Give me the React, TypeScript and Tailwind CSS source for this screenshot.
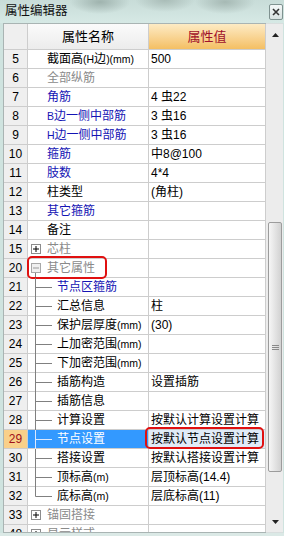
type Kind = "plain" | "plus" | "minus" | "child" | "last";

type RowData = {
  n: string;
  name: string;
  value?: string;
  tone?: "gray" | "blue";
  kind?: Kind;
  selected?: boolean;
  markName?: boolean;
  markValue?: boolean;
};

const rows: RowData[] = [
  { n: "5", name: "截面高(H边)(mm)", value: "500" },
  { n: "6", name: "全部纵筋", tone: "gray" },
  { n: "7", name: "角筋", tone: "blue", value: "4 虫22" },
  { n: "8", name: "B边一侧中部筋", tone: "blue", value: "3 虫16" },
  { n: "9", name: "H边一侧中部筋", tone: "blue", value: "3 虫16" },
  { n: "10", name: "箍筋", tone: "blue", value: "中8@100" },
  { n: "11", name: "肢数", tone: "blue", value: "4*4" },
  { n: "12", name: "柱类型", value: "(角柱)" },
  { n: "13", name: "其它箍筋", tone: "blue" },
  { n: "14", name: "备注" },
  { n: "15", name: "芯柱", tone: "gray", kind: "plus" },
  { n: "20", name: "其它属性", tone: "gray", kind: "minus", markName: true },
  { n: "21", name: "节点区箍筋", tone: "blue", kind: "child" },
  { n: "22", name: "汇总信息", kind: "child", value: "柱" },
  { n: "23", name: "保护层厚度(mm)", kind: "child", value: "(30)" },
  { n: "24", name: "上加密范围(mm)", kind: "child" },
  { n: "25", name: "下加密范围(mm)", kind: "child" },
  { n: "26", name: "插筋构造", kind: "child", value: "设置插筋" },
  { n: "27", name: "插筋信息", kind: "child" },
  { n: "28", name: "计算设置", kind: "child", value: "按默认计算设置计算" },
  { n: "29", name: "节点设置", kind: "child", value: "按默认节点设置计算", selected: true, markValue: true },
  { n: "30", name: "搭接设置", kind: "child", value: "按默认搭接设置计算" },
  { n: "31", name: "顶标高(m)", kind: "child", value: "层顶标高(14.4)" },
  { n: "32", name: "底标高(m)", kind: "last", value: "层底标高(11)" },
  { n: "33", name: "锚固搭接", tone: "gray", kind: "plus" },
  { n: "48", name: "显示样式", tone: "gray", kind: "plus" },
];

// latin runs in the names are drawn a bit smaller, like the reference
function Label({ text }: { text: string }) {
  const parts = text.match(/[\x20-\x7e]+|[^\x20-\x7e]+/g) ?? [];
  return (
    <span>
      {parts.map((p, i) =>
        /^[\x20-\x7e]+$/.test(p) ? (
          <span key={i} className="text-[10.5px]">
            {p}
          </span>
        ) : (
          <span key={i}>{p}</span>
        ),
      )}
    </span>
  );
}

function Toggle({ open, tail }: { open: boolean; tail: boolean }) {
  const stroke = open ? "#a8a8a8" : "#8c8c8c";
  return (
    <svg width="19" height="19" className="shrink-0">
      <rect x="3.5" y="4.5" width="9" height="9" fill={open ? "#f0f0f0" : "#fff"} stroke={stroke} />
      <line x1="5" y1="9" x2="11" y2="9" stroke={open ? "#9a9a9a" : "#000"} />
      {!open && <line x1="8" y1="6" x2="8" y2="12" stroke="#000" />}
      {tail && <line x1="7.5" y1="14" x2="7.5" y2="19" stroke="#808080" />}
    </svg>
  );
}

function Branch({ last, light }: { last: boolean; light: boolean }) {
  const c = light ? "#dbe9ff" : "#808080";
  return (
    <svg width="29" height="19" className="shrink-0">
      <line x1="7.5" y1="0" x2="7.5" y2={last ? 9.5 : 19} stroke={c} />
      <line x1="7.5" y1="9.5" x2="24" y2="9.5" stroke={c} />
    </svg>
  );
}

function Row({ r }: { r: RowData }) {
  const kind = r.kind ?? "plain";
  const toneClass = r.selected
    ? "text-white"
    : r.tone === "gray"
      ? "text-[#8a8a8a]"
      : r.tone === "blue"
        ? "text-[#1414b4]"
        : "text-black";
  return (
    <div className="flex h-[19px] shrink-0 border-b border-[#cdcdcd]">
      <div
        className={`w-[24px] shrink-0 border-r border-[#cdcdcd] flex items-center justify-center text-[12px] ${
          r.selected ? "bg-[#f9d08a] text-[#a0101a]" : "bg-[#efefef] text-black"
        }`}
      >
        {r.n}
      </div>
      <div
        className={`relative w-[121px] shrink-0 border-r border-[#cdcdcd] flex items-center text-[12px] whitespace-nowrap ${
          r.selected ? "bg-[#3399ff]" : ""
        } ${toneClass}`}
      >
        {kind === "plain" && <span className="w-[19px] shrink-0" />}
        {(kind === "plus" || kind === "minus") && <Toggle open={kind === "minus"} tail={kind === "minus"} />}
        {(kind === "child" || kind === "last") && <Branch last={kind === "last"} light={!!r.selected} />}
        <Label text={r.name} />
        {r.markName && (
          <span className="absolute left-[-1px] top-[-3px] w-[80px] h-[23px] border-2 border-[#e01010] rounded-[5px]" />
        )}
      </div>
      <div
        className={`relative flex-1 border-r border-[#cdcdcd] flex items-center pl-[2px] text-[12px] text-black whitespace-nowrap ${
          r.selected ? "bg-[#e1ebf7]" : ""
        }`}
      >
        {r.value}
        {r.markValue && (
          <span className="absolute left-[-4px] right-[1px] top-[-3px] bottom-[-1px] border-2 border-[#e01010] rounded-[5px]" />
        )}
      </div>
    </div>
  );
}

function Arrow({ up }: { up: boolean }) {
  return (
    <svg width="7" height="4">
      <polygon points={up ? "3.5,0 7,4 0,4" : "0,0 7,0 3.5,4"} fill="#222" />
    </svg>
  );
}

export default function App() {
  return (
    <div className="w-[284px] h-[536px] overflow-hidden flex flex-col bg-[#cfe3df] font-['Liberation_Sans','Noto_Sans_CJK_SC',sans-serif]">
      {/* title bar */}
      <div className="h-[23px] shrink-0 flex items-start justify-between pl-[5px] pr-[1px] bg-[radial-gradient(ellipse_30px_12px_at_100px_2px,#9fb3ae,transparent),radial-gradient(ellipse_30px_12px_at_165px_0px,#a9bcb7,transparent),radial-gradient(ellipse_30px_12px_at_225px_2px,#a6b9b4,transparent),linear-gradient(#c8dcd8,#d6e9e5)]">
        <span className="pt-[3px] text-[12.5px] leading-[16px] text-[#111]">属性编辑器</span>
        <div className="mt-[4px] w-[14px] h-[16px] border border-[#7f9290] rounded-[2px] bg-gradient-to-b from-[#f4f8f8] to-[#d8e2e1] flex items-center justify-center">
          <svg width="8" height="8">
            <path d="M1 1 L7 7 M7 1 L1 7" stroke="#333" strokeWidth="1.6" />
          </svg>
        </div>
      </div>

      {/* body */}
      <div className="flex-1 min-h-0 flex pl-[3px] pr-[1px]">
        <div className="w-[263px] shrink-0 flex flex-col border-l border-t border-b border-[#a9b4b3] bg-white overflow-hidden">
          {/* header */}
          <div className="flex h-[26px] shrink-0 border-b border-[#cdcdcd]">
            <div className="w-[24px] shrink-0 border-r border-[#cdcdcd] bg-[#efefef]" />
            <div className="w-[121px] shrink-0 border-r border-[#cdcdcd] bg-gradient-to-b from-[#fbfbfb] to-[#ececec] flex items-center justify-center text-[13px] text-black">
              属性名称
            </div>
            <div className="flex-1 border-r border-[#cdcdcd] bg-gradient-to-b from-[#fdebc4] to-[#f4bf62] flex items-center justify-center text-[13px] text-[#a0102a]">
              属性值
            </div>
          </div>
          {rows.map((r) => (
            <Row key={r.n} r={r} />
          ))}
        </div>

        {/* scrollbar */}
        <div className="w-[17px] shrink-0 flex flex-col bg-[#ececec] border-t border-b border-[#d9dede]">
          <div className="h-[21px] shrink-0 flex items-center justify-center pl-[1px]">
            <Arrow up />
          </div>
          <div className="h-[177px] shrink-0" />
          <div className="h-[250px] shrink-0 ml-[2px] w-[14px] rounded-[2px] border border-[#9c9c9c] bg-gradient-to-r from-[#f6f6f6] via-[#e4e4e4] to-[#d2d2d2] flex items-center justify-center">
            <svg width="7" height="7">
              <path d="M0 1.5 H7 M0 3.5 H7 M0 5.5 H7" stroke="#8a8a8a" />
            </svg>
          </div>
          <div className="flex-1" />
          <div className="h-[20px] shrink-0 flex items-center justify-center pl-[1px]">
            <Arrow up={false} />
          </div>
        </div>
      </div>
      <div className="h-[3px] shrink-0 bg-[#dbe9e6]" />
    </div>
  );
}
